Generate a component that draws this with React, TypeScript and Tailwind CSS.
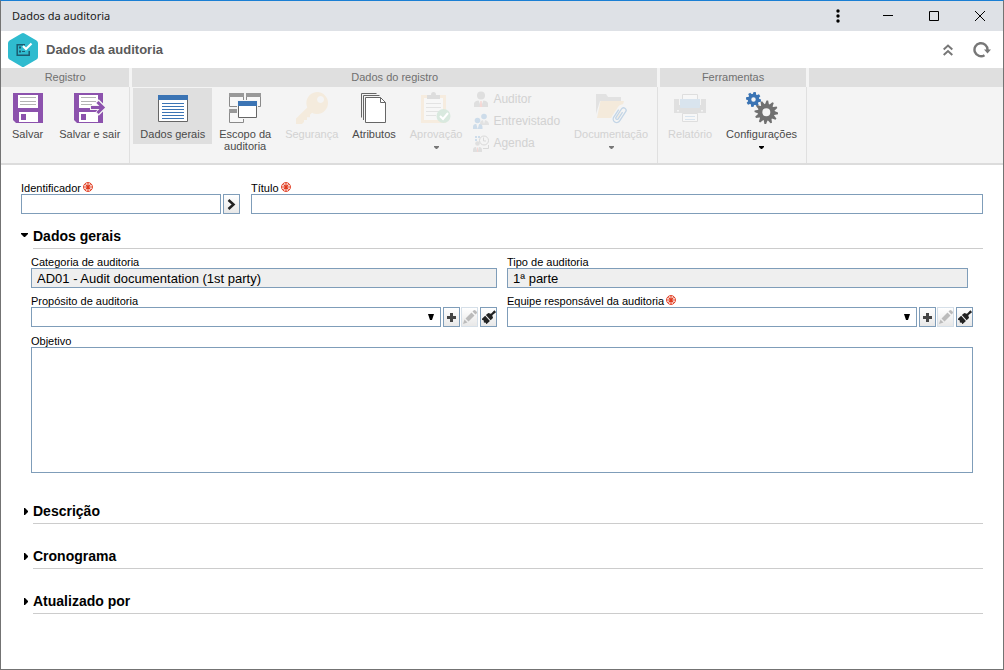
import React, { useState } from "react";
import clsx from "clsx";

const SaveIcon = () => (
  <svg width="30" height="30" viewBox="0 0 30 30">
    <path fill="#8c52ad" d="M0 0h30v30H3l-3-3z" />
    <path fill="#fff" d="M5 2h20v13H5zM6 19h19v10H6z" />
    <path stroke="#b4b4b4" d="M7 4.500h16M7 8.500h16M7 11.500h16" />
    <path fill="#8c52ad" d="M8 21h5v6H8z" />
  </svg>
);

const SaveExitIcon = () => (
  <svg width="32" height="30" viewBox="0 0 32 30">
    <path fill="#8c52ad" d="M0 0h29v30H3l-3-3z" />
    <path fill="#fff" d="M5 2h19v13H5zM5 19h19v10H5z" />
    <path stroke="#b4b4b4" d="M7 4.500h15M7 8.500h15M7 11.500h11" />
    <path fill="#8c52ad" d="M7 21h5v6H7z" />
    <path fill="none" stroke="#f4f4f4" strokeWidth="5" d="M16 14.500h12M23 8l6.500 6.500L23 21" />
    <path fill="none" stroke="#8c52ad" strokeWidth="3" d="M17 14.500h12M23.500 9l5.500 5.500-5.500 5.500" />
  </svg>
);

const FormIcon = () => (
  <svg width="30" height="30" viewBox="0 0 30 30">
    <path fill="#fff" stroke="#666" d="M.5 2.500h29v26H.5z" />
    <path fill="#3b74b4" d="M0 2h30v5H0z" />
    <path
      stroke="#3b74b4"
      d="M4 10.500h22M4 13.500h22M4 16.500h22M4 19.500h22M4 22.500h22M4 25.500h22"
    />
  </svg>
);

const ScopeIcon = () => (
  <svg width="32" height="30" viewBox="0 0 32 30">
    <path
      fill="#f8f8f8"
      stroke="#8a8a8a"
      d="M.5.5h14v13H.5zM17.500.5h14v13h-14zM.5 16.500h14v13H.5z"
    />
    <path fill="#999" d="M0 0h15v4H0zM17 0h15v4H17zM0 16h15v4H0z" />
    <path fill="#f4f4f4" d="M8 7h21v19H8z" />
    <path fill="#fff" stroke="#666" d="M9.500 8.500h18v16h-18z" />
    <path fill="#3b74b4" d="M9 8h19v5H9z" />
  </svg>
);

const KeyIcon = () => (
  <svg width="32" height="32" viewBox="0 0 32 32">
    <path
      fill="#f4ebdd"
      fillRule="evenodd"
      d="M21 0a11 11 0 0 1 0 22q-3 0-5-1.300l-2 2v2.500h-3V28H8v2l-2 2H0v-5.500L11.300 15.500A11 11 0 0 1 21 0zm3.500 4a3.500 3.500 0 1 0 .1 0z"
    />
  </svg>
);

const PagesIcon = () => (
  <svg width="26" height="31" viewBox="0 0 26 31" fill="none" stroke="#666">
    <path d="M.5 24.500V.5h15M2.500 27V2.500h16" />
    <path fill="#fff" d="M4.500 4.500h15l5 5v20h-20z" />
    <path d="M19.500 4.500v5h5" />
  </svg>
);

const ClipboardIcon = () => (
  <svg width="30" height="32" viewBox="0 0 30 32">
    <path fill="#f6ecdf" d="M0 3h25v28H0z" />
    <path fill="#f7f7f7" d="M3 6h19v22H3z" />
    <path stroke="#e3e3e3" d="M5 11.500h15M5 15.500h15M5 19.500h15M5 23.500h10" />
    <path fill="#ddd" d="M6 7V3h4q0-3 2.500-3T15 3h4v4z" />
    <circle cx="22.500" cy="24" r="7" fill="#d9e9df" />
    <path stroke="#fff" strokeWidth="2" fill="none" d="m19 24 3 3 5-6" />
  </svg>
);

const PersonIcon = () => (
  <svg width="16" height="17" viewBox="0 0 16 17">
    <circle cx="8" cy="4.500" r="4" fill="#dfdfdf" />
    <path fill="#dfdfdf" d="M1 16v-3q0-3 4-3.500h6q4 .5 4 3.500v3z" />
    <path fill="#f4f4f4" d="m5.500 9 2.500 7 2.500-7z" />
    <path fill="#f5d8d5" d="M7.300 10h1.400l.6 6H6.700z" />
  </svg>
);

const PeopleIcon = () => (
  <svg width="16" height="17" viewBox="0 0 16 17">
    <circle cx="11" cy="3.500" r="2.800" fill="#cddcea" />
    <path fill="#e2e2e2" d="M7 11q0-4 4-4t5 4v1H7z" />
    <circle cx="4.500" cy="7.500" r="2.800" fill="#cddcea" />
    <path fill="#cddcea" d="M0 16v-2q0-3 3-3h3q3.500 0 3.500 3v2z" />
    <path fill="#f4f4f4" d="m3.300 11 1.400 5 1.400-5zM10 7l1 4 1-4z" />
  </svg>
);

const AgendaIcon = () => (
  <svg width="16" height="17" viewBox="0 0 16 17">
    <path fill="#cddcea" d="M2 1h2v2H2zM5 1h2v2H5zM2 4h2v2H2z" />
    <circle cx="4.500" cy="8.500" r="2.300" fill="#dfdfdf" />
    <path fill="#dfdfdf" d="M0 17v-2q0-3 3-3h3q3 0 3 3v2z" />
    <path fill="#f4f4f4" d="m3 12 1.500 5L6 12z" />
    <path fill="#f5d8d5" d="M4 12.500h1V17H4z" />
    <circle cx="11" cy="5.500" r="4.500" fill="#f4f4f4" stroke="#d9d9d9" />
    <path stroke="#d9d9d9" fill="none" d="M10.500 2.500V6H13M10 13.500h5.500V10" />
  </svg>
);

const FolderIcon = () => (
  <svg width="32" height="32" viewBox="0 0 32 32">
    <path fill="#e2e2e2" d="M1 2h10l2 3h13v4H5L1 22z" />
    <path fill="#f4eadb" d="M5.500 9H29l-5 17H2z" />
    <g transform="translate(25 22) rotate(33)" fill="none">
      <path stroke="#f4f4f4" strokeWidth="5" d="M-3 6v-11a3 3 0 0 1 6 0V6a3 3 0 0 1-6 0z" />
      <path
        stroke="#c3d5e6"
        strokeWidth="1.300"
        d="M-3.500-3v9a3.500 3.500 0 0 0 7 0V-5a2.500 2.500 0 0 0-5 0V5a1.300 1.300 0 0 0 2.600 0v-8"
      />
    </g>
  </svg>
);

const PrinterIcon = () => (
  <svg width="32" height="30" viewBox="0 0 32 30">
    <path fill="#e0e0e0" d="M0 6h5v6h22V6h5v14H0z" />
    <path fill="#f7f7f7" stroke="#dedede" d="M8.500 1.500h15v6h-15z" />
    <path fill="#d9e4ee" d="M6 6h20v8q0 1-1 1H7q-1 0-1-1z" />
    <path fill="#f7f7f7" stroke="#dedede" d="M8.500 20.500h15v8h-15z" />
    <path fill="#f4f4f4" d="M3 17h2v1.500H3zM27 17h2v1.500h-2z" />
    <path stroke="#d9e4ee" d="M11 23.500h10M11 26.500h10" />
  </svg>
);

const bigTeeth = [0, 30, 60, 90, 120, 150, 180, 210, 240, 270, 300, 330];
const smallTeeth = [0, 45, 90, 135, 180, 225, 270, 315];

const GearsIcon = () => (
  <svg width="32" height="32" viewBox="0 0 32 32">
    <g fill="#3b74b4">
      {smallTeeth.map((a) => (
        <path key={a} d="M5.500 4 6.300 0h2.400l.8 4z" transform={`rotate(${a + 10} 7.500 7.500)`} />
      ))}
    </g>
    <circle cx="7.500" cy="7.500" r="4" fill="none" stroke="#3b74b4" strokeWidth="3.500" />
    <g fill="#707070">
      {bigTeeth.map((a) => (
        <path key={a} d="m18 13.500 1.500-5h1.600l1.500 5z" transform={`rotate(${a + 5} 20.300 20.300)`} />
      ))}
    </g>
    <circle cx="20.300" cy="20.300" r="6.200" fill="none" stroke="#707070" strokeWidth="4.400" />
  </svg>
);

const LogoIcon = () => (
  <svg width="30" height="34" viewBox="0 0 30 34">
    <path
      fill="#2fbbcf"
      d="M13.500.5q1.500-1 3 0l12 7Q30 8.500 30 10v14q0 1.500-1.500 2.500l-12 7q-1.500 1-3 0l-12-7Q0 25.500 0 24V10q0-1.500 1.500-2.500z"
    />
    <path fill="none" stroke="#1b5b70" strokeWidth="1.500" d="M17 11.700H9.200v10.600h12V18" />
    <path fill="#1b5b70" d="M11 13.500h2v2h-2zM11 17.500h2v2h-2zM14 18h3v1h-3z" />
    <path fill="none" stroke="#fff" strokeWidth="2.200" d="m15 13 3 3 5.500-5.500" />
  </svg>
);

const RequiredMark = () => (
  <svg width="10" height="10" viewBox="0 0 9 9" fill="none" stroke="#e03a1e" className="ml-[2px]">
    <circle cx="4.500" cy="4.500" r="4" strokeWidth=".9" />
    <path d="M4.500 1v7M1 4.500h7M2.200 2.200l4.600 4.600M6.800 2.200 2.200 6.800" />
  </svg>
);

const DownArrow = ({ faded }: { faded?: boolean }) => (
  <svg width="5" height="3" viewBox="0 0 5 3" fill={faded ? "#777" : "#000"} className="mt-[2px]">
    <path d="M0 0h5v1L3 3H2L0 1z" />
  </svg>
);

interface IRibbonButtonProps {
  icon: React.ReactNode;
  label: string;
  active?: boolean;
  disabled?: boolean;
  menu?: boolean;
}

const RibbonButton: React.FC<IRibbonButtonProps> = (props) => {
  const { icon, label, active, disabled, menu } = props;
  return (
    <button
      type="button"
      disabled={disabled}
      className={clsx(
        "flex flex-col items-center px-[7px] pt-[5px] pb-1 text-[11px] leading-[12px] whitespace-pre-line",
        active && "bg-[#dfdfdf]",
        disabled ? "text-[#d2d2d2]" : "text-[#4a4a4a]"
      )}
    >
      <span className="flex h-[30px] items-center mb-[5px]">{icon}</span>
      {label}
      {menu && (
        <span className="pt-1">
          <DownArrow faded={disabled} />
        </span>
      )}
    </button>
  );
};

const RibbonGroup: React.FC<{ title: string; children: React.ReactNode }> = ({ title, children }) => (
  <section className="flex flex-col">
    <h2 className="mr-px h-[19px] bg-[#dfdfdf] text-center text-[11px] leading-[19px] text-[#707070]">
      {title}
    </h2>
    <div className="flex grow items-start border-r border-[#e0e0e0] pl-px pr-[2px] pt-px">{children}</div>
  </section>
);

const people = [
  { label: "Auditor", icon: <PersonIcon /> },
  { label: "Entrevistado", icon: <PeopleIcon /> },
  { label: "Agenda", icon: <AgendaIcon /> },
];

const Ribbon = () => (
  <div className="flex min-h-[97px] gap-[2px] border-b-2 border-[#dcdcdc] bg-[#f4f4f4]">
    <RibbonGroup title="Registro">
      <div className="flex gap-[2px] pl-[3px]">
        <RibbonButton icon={<SaveIcon />} label="Salvar" />
        <RibbonButton icon={<SaveExitIcon />} label="Salvar e sair" />
      </div>
    </RibbonGroup>
    <RibbonGroup title="Dados do registro">
      <RibbonButton icon={<FormIcon />} label="Dados gerais" active />
      <RibbonButton icon={<ScopeIcon />} label={"Escopo da\nauditoria"} />
      <RibbonButton icon={<KeyIcon />} label="Segurança" disabled />
      <RibbonButton icon={<PagesIcon />} label="Atributos" />
      <RibbonButton icon={<ClipboardIcon />} label="Aprovação" disabled menu />
      <div className="flex flex-col pl-1 pr-[7px]">
        {people.map((p) => (
          <button
            key={p.label}
            type="button"
            disabled
            className="flex h-[22px] items-center gap-1 text-[12px] text-[#d2d2d2]"
          >
            {p.icon}
            {p.label}
          </button>
        ))}
      </div>
      <RibbonButton icon={<FolderIcon />} label="Documentação" disabled menu />
    </RibbonGroup>
    <RibbonGroup title="Ferramentas">
      <RibbonButton icon={<PrinterIcon />} label="Relatório" disabled />
      <RibbonButton icon={<GearsIcon />} label="Configurações" menu />
    </RibbonGroup>
    <div className="h-[19px] grow bg-[#dfdfdf]" />
  </div>
);

const TitleBar = () => (
  <div className="flex h-[30px] items-center bg-[#dee1e6]">
    <span className="grow pl-[11px] font-['Noto_Sans',sans-serif] text-[11px] text-[#1a1a1a]">
      Dados da auditoria
    </span>
    <button type="button" aria-label="Menu" className="mr-1 flex w-[46px] justify-center">
      <svg width="4" height="14" viewBox="0 0 4 14">
        <circle cx="2" cy="2" r="1.700" />
        <circle cx="2" cy="7" r="1.700" />
        <circle cx="2" cy="12" r="1.700" />
      </svg>
    </button>
    <button type="button" aria-label="Minimizar" className="flex w-[46px] justify-center">
      <svg width="10" height="10" stroke="#000">
        <path d="M0 4.500h10" />
      </svg>
    </button>
    <button type="button" aria-label="Maximizar" className="flex w-[46px] justify-center">
      <svg width="10" height="10" stroke="#000" fill="none">
        <path d="M.5.5h9v9h-9z" />
      </svg>
    </button>
    <button type="button" aria-label="Fechar" className="flex w-[46px] justify-center">
      <svg width="10" height="10" stroke="#000">
        <path d="m0 0 10 10M10 0 0 10" />
      </svg>
    </button>
  </div>
);

const Header = () => (
  <header className="flex h-[37px] items-center bg-white pl-[7px] pr-3">
    <LogoIcon />
    <h1 className="grow pl-2 text-[13px] font-bold text-[#5a5a5a]">Dados da auditoria</h1>
    <button type="button" aria-label="Recolher" className="mr-5">
      <svg width="10" height="12" viewBox="0 0 10 12" fill="none" stroke="#777" strokeWidth="2">
        <path d="m.7 5.500 4.300-4 4.300 4M.7 11l4.300-4 4.300 4" />
      </svg>
    </button>
    <button type="button" aria-label="Atualizar">
      <svg width="18" height="16" viewBox="0 0 18 16">
        <path fill="none" stroke="#777" strokeWidth="2.400" d="M11.500 13.200A6.500 6.500 0 1 1 14.500 8" />
        <path fill="#777" d="M11 7.500h7l-3.500 4z" />
      </svg>
    </button>
  </header>
);

interface IFieldProps {
  id: string;
  label: string;
  required?: boolean;
  className?: string;
  children: React.ReactNode;
}

const Field: React.FC<IFieldProps> = ({ id, label, required, className, children }) => (
  <div className={className}>
    <label htmlFor={id} className="flex h-3 items-start text-[11px] leading-[12px]">
      {label}
      {required && <RequiredMark />}
    </label>
    {children}
  </div>
);

const IconButton: React.FC<{ label: string; disabled?: boolean; children: React.ReactNode }> = (props) => (
  <button
    type="button"
    aria-label={props.label}
    disabled={props.disabled}
    className="flex h-5 w-[17px] shrink-0 items-center justify-center border border-[#7f9db9] bg-linear-to-b from-white to-[#e8e8e8] disabled:border-[#d5dfe8]"
  >
    {props.children}
  </button>
);

const SelectField: React.FC<{ id: string; label: string; required?: boolean }> = (props) => (
  <Field {...props}>
    <div className="flex">
      <div className="relative mr-[2px] grow">
        <select
          id={props.id}
          className="block h-5 w-full appearance-none border border-[#7f9db9] bg-white px-1 text-[13px]"
        />
        <svg width="6" height="7" className="pointer-events-none absolute right-[7px] top-[7px]">
          <path d="M0 0h6L4 6H2z" />
        </svg>
      </div>
      <IconButton label="Adicionar">
        <svg width="9" height="9" stroke="#444" strokeWidth="3">
          <path d="M4.500 0v9M0 4.500h9" />
        </svg>
      </IconButton>
      <span className="ml-px mr-[2px] flex">
        <IconButton label="Editar" disabled>
          <svg width="14" height="14" viewBox="0 0 14 14" className="shrink-0">
            <path fill="#bbb" d="m0 14 1.500-4.500 3 3zM2.500 8.500 8.500 2.500l3 3-6 6zM9.500 1.500l1-1q1-1 2 0l1 1q1 1 0 2l-1 1z" />
          </svg>
        </IconButton>
      </span>
      <IconButton label="Limpar">
        <svg width="14" height="14" viewBox="0 0 14 14" className="shrink-0">
          <g transform="translate(7 7) rotate(47)" fill="#222">
            <path d="M-3.500 2h7v5L2 6.200.5 7.500-1 6.200l-2.500 1z" />
            <path d="M-3.500 1v-2.500q0-1.500 2-1.500L-1-4-1.300-8.500h2.600L1-4l.5 1q2 0 2 1.500V1z" />
          </g>
        </svg>
      </IconButton>
    </div>
  </Field>
);

interface ISectionProps {
  title: string;
  className: string;
  defaultOpen?: boolean;
  children?: React.ReactNode;
}

const Section: React.FC<ISectionProps> = ({ title, className, defaultOpen = false, children }) => {
  const [open, setOpen] = useState(defaultOpen);
  return (
    <section className={className}>
      <h2 className="flex">
        <button
          type="button"
          aria-expanded={open}
          onClick={() => setOpen(!open)}
          className="flex grow text-left text-[14px] leading-[16px] font-bold"
        >
          <span className="flex h-4 w-3 items-center">
            {open ? (
              <svg width="7" height="6">
                <path d="M0 0h7v1L4 4H3L0 1z" />
              </svg>
            ) : (
              <svg width="7" height="7">
                <path d="M3 0h1l3 3v1L4 7H3z" />
              </svg>
            )}
          </span>
          <span className="grow border-b border-[#ccc] pb-1">{title}</span>
        </button>
      </h2>
      {open && children}
    </section>
  );
};

const inputStyle = "block h-5 border border-[#7f9db9] px-[5px] text-[13px] leading-[18px]";

const App = () => {
  return (
    <div className="flex min-h-screen flex-col border border-[#737373] border-t-[#1a7fd4] bg-white font-['Liberation_Sans',Arial,sans-serif] text-black">
      <TitleBar />
      <Header />
      <Ribbon />

      <main className="px-5 pt-[17px] pb-8">
        <div className="flex gap-[11px]">
          <Field id="identificador" label="Identificador" required>
            <div className="flex gap-[2px]">
              <input id="identificador" className={clsx(inputStyle, "w-[200px]")} />
              <IconButton label="Gerar identificador">
                <svg width="9" height="11" fill="none" stroke="#222" strokeWidth="2.500">
                  <path d="m1.500 1 5 4.500-5 4.500" />
                </svg>
              </IconButton>
            </div>
          </Field>
          <Field id="titulo" label="Título" required className="grow">
            <input id="titulo" className={clsx(inputStyle, "w-full")} />
          </Field>
        </div>

        <Section title="Dados gerais" defaultOpen className="mt-[14px]">
          <div className="px-[10px] pt-[7px]">
            <div className="grid grid-cols-2 gap-x-[10px] gap-y-[7px]">
              <Field id="categoria" label="Categoria de auditoria">
                <input
                  id="categoria"
                  readOnly
                  value="AD01 - Audit documentation (1st party)"
                  className={clsx(inputStyle, "w-full bg-[#efefef]")}
                />
              </Field>
              <Field id="tipo" label="Tipo de auditoria" className="mr-[5px]">
                <input id="tipo" readOnly value="1ª parte" className={clsx(inputStyle, "w-full bg-[#efefef]")} />
              </Field>
              <SelectField id="proposito" label="Propósito de auditoria" />
              <SelectField id="equipe" label="Equipe responsável da auditoria" required />
            </div>
            <Field id="objetivo" label="Objetivo" className="mt-2">
              <textarea
                id="objetivo"
                className="block h-[126px] w-full resize-none border border-[#7f9db9] p-1 text-[13px]"
              />
            </Field>
          </div>
        </Section>
        <Section title="Descrição" className="mt-[30px]" />
        <Section title="Cronograma" className="mt-6" />
        <Section title="Atualizado por" className="mt-6" />
      </main>
    </div>
  );
};

export default App;
